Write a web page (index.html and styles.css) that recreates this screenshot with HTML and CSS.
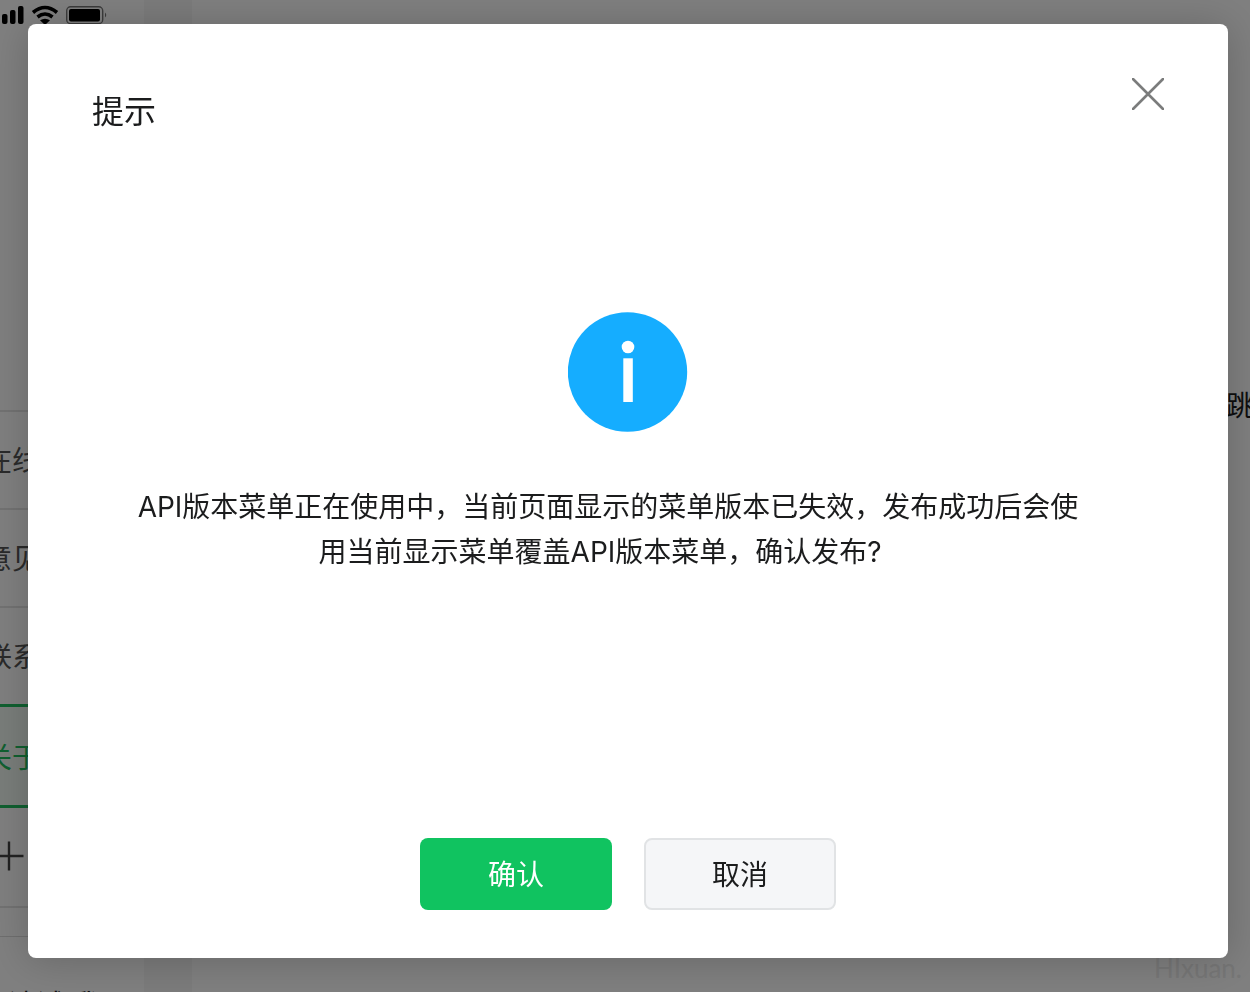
FILE: index.html
```
<!DOCTYPE html>
<html lang="zh-CN">
<head>
    <meta charset="UTF-8">
    <meta name="viewport" content="width=device-width, initial-scale=1.0">
    <title>提示</title>
    <link rel="stylesheet" href="styles.css">
</head>
<body>
    <div class="page">
        <div class="preview">
            <div class="status-bar">
                <svg width="108" height="28" viewBox="0 0 108 28">
                    <rect x="2" y="14" width="5.500" height="10" rx="2"/>
                    <rect x="10" y="10" width="5.500" height="14" rx="2"/>
                    <rect x="18" y="6" width="5.500" height="18" rx="2"/>
                    <path d="M33 12.500Q45 2.500 57 12.500M37.500 17Q45 11 52.500 17" fill="none" stroke="#000" stroke-width="3.600"/>
                    <path d="M40 20.300Q45 17 50 20.300L45 25z"/>
                    <rect x="66.700" y="6.700" width="36" height="17" rx="4" fill="none" stroke="#777" stroke-width="1.400"/>
                    <rect x="69" y="9" width="31" height="12.500" rx="2"/>
                    <path d="M105 12.500q2.500 2.500 0 5z" fill="#777"/>
                </svg>
            </div>
            <ul class="menu">
                <li>在线</li>
                <li>意见</li>
                <li>联系</li>
                <li class="active">关于</li>
                <li class="add">
                    <svg width="28" height="36" viewBox="0 0 28 36">
                        <path d="M0 18H23.500M9 3.500V32.500" fill="none" stroke="#444" stroke-width="2.400"/>
                    </svg>
                </li>
            </ul>
            <div class="preview-footer">读试 我</div>
        </div>
        <div class="editor">
            <span class="field-label">跳</span>
            <span class="watermark">HIxuan.</span>
        </div>
    </div>

    <div class="mask">
        <div class="dialog" role="dialog" aria-labelledby="dialog-title">
            <div class="dialog-header">
                <h1 id="dialog-title">提示</h1>
                <button class="close-btn" aria-label="关闭">
                    <svg width="32" height="32" viewBox="0 0 32 32">
                        <path d="M1 1L31 31M31 1L1 31" stroke="#7b7c7c" stroke-width="2.600" stroke-linecap="round"/>
                    </svg>
                </button>
            </div>
            <div class="dialog-body">
                <svg class="info-icon" width="120" height="120" viewBox="0 0 120 120">
                    <circle cx="59.500" cy="60" r="59.700" fill="#15adff"/>
                    <circle cx="60" cy="35" r="6.300" fill="#fff"/>
                    <rect x="55.300" y="46.300" width="9.500" height="43.700" fill="#fff"/>
                </svg>
                <p>API版本菜单正在使用中，当前页面显示的菜单版本已失效，发布成功后会使用当前显示菜单覆盖API版本菜单，确认发布?&nbsp;&nbsp;</p>
            </div>
            <div class="dialog-footer">
                <button class="btn btn-primary">确认</button>
                <button class="btn btn-default">取消</button>
            </div>
        </div>
    </div>
</body>
</html>
```

FILE: styles.css
```
* {
    box-sizing: border-box;
}
body {
    margin: 0;
    height: 100vh;
    overflow: hidden;
    font-family: Inter, "Noto Sans CJK SC", sans-serif;
    font-size: 28px;
    color: #1b1c1d;
}
.page {
    display: flex;
    height: 100vh;
    overflow: hidden;
    background-color: #f6f7f7;
}
.preview {
    display: flex;
    flex-direction: column;
    width: 144px;
    margin-right: 48px;
    background-color: #fff;
}
.status-bar {
    height: 410px;
    flex-shrink: 0;
}
.status-bar svg {
    display: block;
}
.menu {
    list-style: none;
    margin: 0;
    padding: 0;
    flex-shrink: 0;
}
.menu li {
    display: flex;
    align-items: center;
    height: 98px;
    padding-bottom: 2px;
    text-indent: -16px;
    border-top: 2px solid #e4e4e4;
    color: #555;
}
.menu .active {
    height: 104px;
    padding-bottom: 0;
    border-top: 3px solid #20bf60;
    border-bottom: 3px solid #20bf60;
    background-color: #f2faf4;
    color: #20bf60;
}
.menu .add {
    height: 100px;
    border-top: none;
    border-bottom: 2px solid #e4e4e4;
}
.preview-footer {
    margin-top: 28px;
    padding: 46px 0 0 8px;
    border-top: 1px solid #dcdcdc;
    white-space: nowrap;
}
.editor {
    flex: 1;
    display: flex;
    flex-direction: column;
    justify-content: space-between;
    align-items: flex-end;
    padding: 384px 0 8px;
    background-color: #fff;
}
.field-label {
    margin-right: -4px;
}
.watermark {
    margin-right: 8px;
    font-family: Lato, sans-serif;
    font-size: 26px;
    color: #ececec;
}
.mask {
    position: fixed;
    inset: 0;
    display: flex;
    padding: 24px 22px 34px 28px;
    background-color: rgba(0, 0, 0, 0.5);
}
.dialog {
    flex: 1;
    display: flex;
    flex-direction: column;
    padding: 54px 64px 48px;
    border-radius: 8px;
    background-color: #fff;
    box-shadow: 0 2px 40px rgba(0, 0, 0, 0.2);
}
.dialog-header {
    display: flex;
    justify-content: space-between;
    align-items: flex-start;
}
.dialog-header h1 {
    margin: 0;
    font-size: 32px;
    font-weight: 400;
    line-height: 68px;
}
.close-btn {
    padding: 0;
    border: none;
    background: none;
    cursor: pointer;
}
.close-btn svg {
    display: block;
}
.dialog-body {
    display: flex;
    flex-direction: column;
    align-items: center;
    padding-top: 166px;
}
.dialog-body p {
    margin: 53px 76px 0 36px;
    line-height: 45px;
    text-align: center;
}
.dialog-footer {
    display: flex;
    justify-content: center;
    gap: 32px;
    margin-top: auto;
}
.btn {
    width: 192px;
    height: 72px;
    padding: 0 0 2px;
    border: none;
    border-radius: 8px;
    font: inherit;
    cursor: pointer;
}
.btn-primary {
    background-color: #10c360;
    color: #fff;
}
.btn-default {
    border: 2px solid #e1e3e5;
    background-color: #f5f6f8;
    color: #1b1c1d;
}
```
